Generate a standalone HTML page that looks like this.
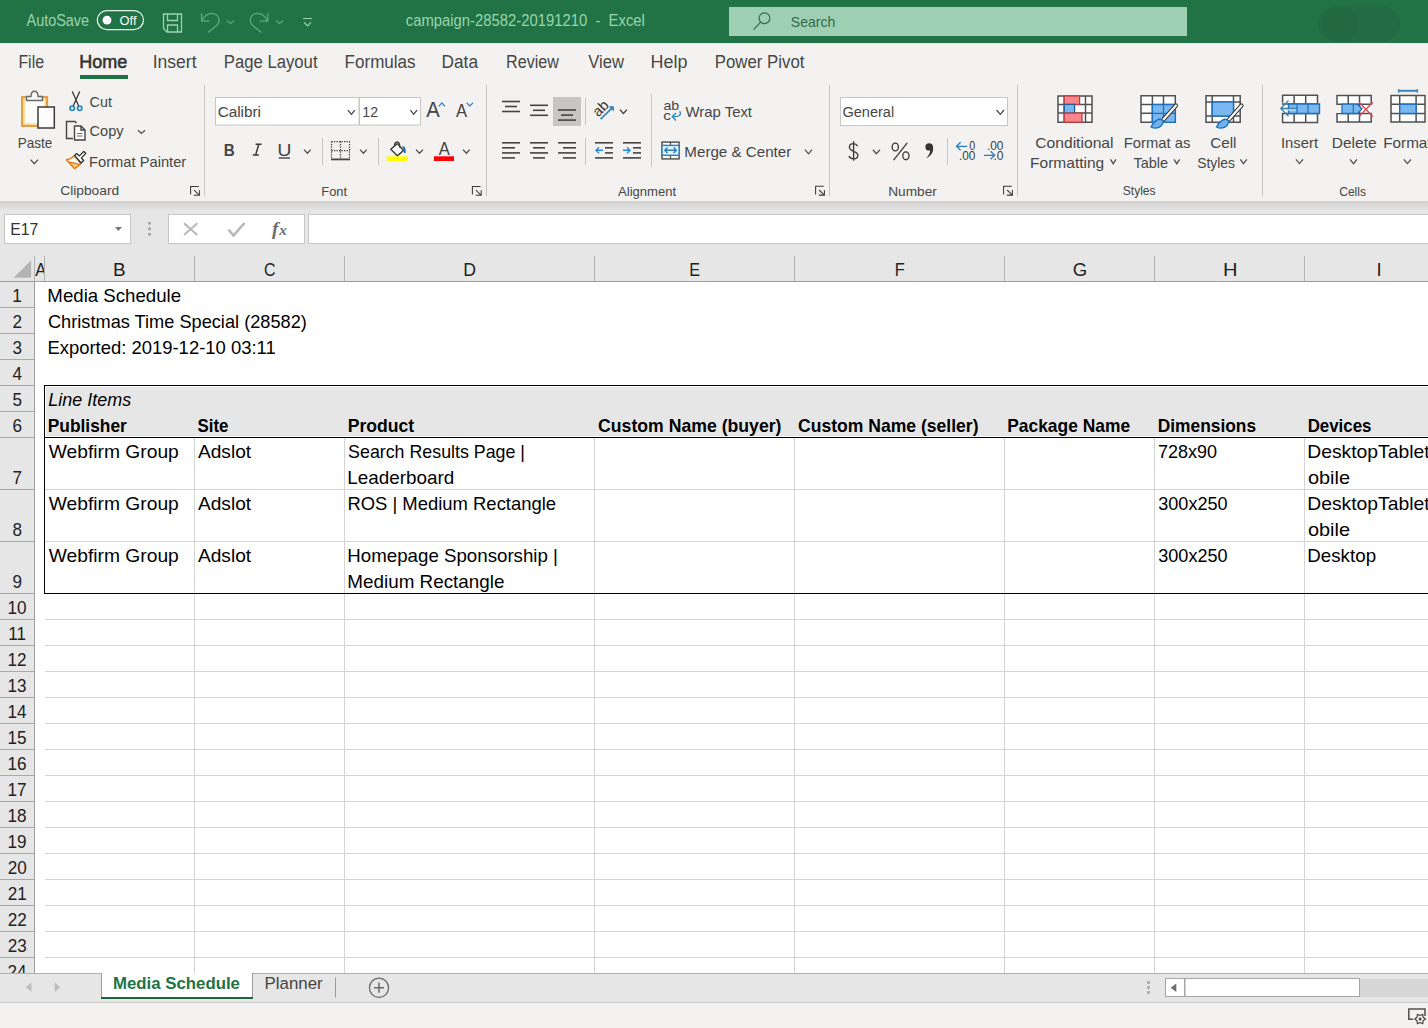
<!DOCTYPE html>
<html><head><meta charset="utf-8"><title>campaign-28582-20191210 - Excel</title>
<style>
html,body{margin:0;padding:0;background:#fff;}
body{width:1428px;height:1028px;overflow:hidden;position:relative;font-family:"Liberation Sans",sans-serif;}
.region{position:absolute;left:0;width:1428px;}
#titlebar{top:0;height:43px;background:#217346;}
#ribbon{top:43px;height:158px;background:#f3f2f1;}
#sheet{top:201px;height:772px;background:#e6e6e6;}
#tabs{top:973px;height:30px;background:#e6e6e6;}
#status{top:1003px;height:25px;background:#f3f2f1;}
svg{position:absolute;left:0;top:0;}
text{font-family:"Liberation Sans",sans-serif;white-space:pre;}
</style></head><body>
<div class="region" id="titlebar"></div>
<div class="region" id="ribbon"></div>
<div class="region" id="sheet"></div>
<div class="region" id="tabs"></div>
<div class="region" id="status"></div>
<svg width="1428" height="1028" viewBox="0 0 1428 1028">
<rect x="0" y="201" width="1428" height="772" fill="#e6e6e6"/>
<defs><linearGradient id="sh" x1="0" y1="0" x2="0" y2="1"><stop offset="0" stop-color="#cfcfcf"/><stop offset="1" stop-color="#e6e6e6"/></linearGradient></defs>
<rect x="0" y="201" width="1428" height="10" fill="url(#sh)"/>
<rect x="35" y="282" width="1393" height="691" fill="#fff"/>
<rect x="194" y="438" width="1" height="535" fill="#d4d4d4"/>
<rect x="344" y="438" width="1" height="535" fill="#d4d4d4"/>
<rect x="594" y="438" width="1" height="535" fill="#d4d4d4"/>
<rect x="794" y="438" width="1" height="535" fill="#d4d4d4"/>
<rect x="1004" y="438" width="1" height="535" fill="#d4d4d4"/>
<rect x="1154" y="438" width="1" height="535" fill="#d4d4d4"/>
<rect x="1304" y="438" width="1" height="535" fill="#d4d4d4"/>
<rect x="45" y="489" width="1383" height="1" fill="#d4d4d4"/>
<rect x="45" y="541" width="1383" height="1" fill="#d4d4d4"/>
<rect x="45" y="619" width="1383" height="1" fill="#d4d4d4"/>
<rect x="45" y="645" width="1383" height="1" fill="#d4d4d4"/>
<rect x="45" y="671" width="1383" height="1" fill="#d4d4d4"/>
<rect x="45" y="697" width="1383" height="1" fill="#d4d4d4"/>
<rect x="45" y="723" width="1383" height="1" fill="#d4d4d4"/>
<rect x="45" y="749" width="1383" height="1" fill="#d4d4d4"/>
<rect x="45" y="775" width="1383" height="1" fill="#d4d4d4"/>
<rect x="45" y="801" width="1383" height="1" fill="#d4d4d4"/>
<rect x="45" y="827" width="1383" height="1" fill="#d4d4d4"/>
<rect x="45" y="853" width="1383" height="1" fill="#d4d4d4"/>
<rect x="45" y="879" width="1383" height="1" fill="#d4d4d4"/>
<rect x="45" y="905" width="1383" height="1" fill="#d4d4d4"/>
<rect x="45" y="931" width="1383" height="1" fill="#d4d4d4"/>
<rect x="45" y="957" width="1383" height="1" fill="#d4d4d4"/>
<rect x="46" y="387" width="1382" height="49" fill="#e7e6e6"/>
<rect x="44" y="385" width="1384" height="1" fill="#000"/>
<rect x="44" y="437" width="1384" height="1" fill="#000"/>
<rect x="44" y="593" width="1384" height="1" fill="#000"/>
<rect x="44" y="385" width="1" height="209" fill="#000"/>
<rect x="34" y="256" width="1" height="25" fill="#b4b4b4"/>
<rect x="44" y="256" width="1" height="25" fill="#b4b4b4"/>
<rect x="194" y="256" width="1" height="25" fill="#b4b4b4"/>
<rect x="344" y="256" width="1" height="25" fill="#b4b4b4"/>
<rect x="594" y="256" width="1" height="25" fill="#b4b4b4"/>
<rect x="794" y="256" width="1" height="25" fill="#b4b4b4"/>
<rect x="1004" y="256" width="1" height="25" fill="#b4b4b4"/>
<rect x="1154" y="256" width="1" height="25" fill="#b4b4b4"/>
<rect x="1304" y="256" width="1" height="25" fill="#b4b4b4"/>
<rect x="0" y="281" width="1428" height="1" fill="#9e9e9e"/>
<rect x="34" y="282" width="1" height="691" fill="#9e9e9e"/>
<path d="M31.1,260.6 L31.1,277.7 L13.6,277.7 Z" fill="#b4b4b4"/>
<clipPath id="ca"><rect x="35" y="256" width="9" height="25"/></clipPath>
<g clip-path="url(#ca)">
<text x="35.36" y="275.50" font-size="18.60" font-weight="normal" font-style="normal" fill="#222" textLength="11.07" lengthAdjust="spacingAndGlyphs">A</text>
</g>
<text x="113.14" y="275.50" font-size="18.60" font-weight="normal" font-style="normal" fill="#222" textLength="12.65" lengthAdjust="spacingAndGlyphs">B</text>
<text x="264.00" y="275.50" font-size="18.60" font-weight="normal" font-style="normal" fill="#222" textLength="11.49" lengthAdjust="spacingAndGlyphs">C</text>
<text x="463.34" y="275.50" font-size="18.60" font-weight="normal" font-style="normal" fill="#222" textLength="12.80" lengthAdjust="spacingAndGlyphs">D</text>
<text x="689.26" y="275.50" font-size="18.60" font-weight="normal" font-style="normal" fill="#222" textLength="10.82" lengthAdjust="spacingAndGlyphs">E</text>
<text x="894.65" y="275.50" font-size="18.60" font-weight="normal" font-style="normal" fill="#222" textLength="10.02" lengthAdjust="spacingAndGlyphs">F</text>
<text x="1072.77" y="275.50" font-size="18.60" font-weight="normal" font-style="normal" fill="#222" textLength="14.42" lengthAdjust="spacingAndGlyphs">G</text>
<text x="1223.14" y="275.50" font-size="18.60" font-weight="normal" font-style="normal" fill="#222" textLength="14.51" lengthAdjust="spacingAndGlyphs">H</text>
<text x="1376.48" y="275.50" font-size="18.60" font-weight="normal" font-style="normal" fill="#222" textLength="5.17" lengthAdjust="spacingAndGlyphs">I</text>
<rect x="0" y="307" width="34" height="1" fill="#a8a8a8"/>
<rect x="0" y="333" width="34" height="1" fill="#a8a8a8"/>
<rect x="0" y="359" width="34" height="1" fill="#a8a8a8"/>
<rect x="0" y="385" width="34" height="1" fill="#a8a8a8"/>
<rect x="0" y="411" width="34" height="1" fill="#a8a8a8"/>
<rect x="0" y="437" width="34" height="1" fill="#a8a8a8"/>
<rect x="0" y="489" width="34" height="1" fill="#a8a8a8"/>
<rect x="0" y="541" width="34" height="1" fill="#a8a8a8"/>
<rect x="0" y="593" width="34" height="1" fill="#a8a8a8"/>
<rect x="0" y="619" width="34" height="1" fill="#a8a8a8"/>
<rect x="0" y="645" width="34" height="1" fill="#a8a8a8"/>
<rect x="0" y="671" width="34" height="1" fill="#a8a8a8"/>
<rect x="0" y="697" width="34" height="1" fill="#a8a8a8"/>
<rect x="0" y="723" width="34" height="1" fill="#a8a8a8"/>
<rect x="0" y="749" width="34" height="1" fill="#a8a8a8"/>
<rect x="0" y="775" width="34" height="1" fill="#a8a8a8"/>
<rect x="0" y="801" width="34" height="1" fill="#a8a8a8"/>
<rect x="0" y="827" width="34" height="1" fill="#a8a8a8"/>
<rect x="0" y="853" width="34" height="1" fill="#a8a8a8"/>
<rect x="0" y="879" width="34" height="1" fill="#a8a8a8"/>
<rect x="0" y="905" width="34" height="1" fill="#a8a8a8"/>
<rect x="0" y="931" width="34" height="1" fill="#a8a8a8"/>
<rect x="0" y="957" width="34" height="1" fill="#a8a8a8"/>
<clipPath id="rh"><rect x="0" y="282" width="34" height="691"/></clipPath><g clip-path="url(#rh)">
<text x="12.32" y="301.80" font-size="18.60" font-weight="normal" font-style="normal" fill="#222" textLength="9.52" lengthAdjust="spacingAndGlyphs">1</text>
<text x="12.55" y="327.80" font-size="18.60" font-weight="normal" font-style="normal" fill="#222" textLength="9.52" lengthAdjust="spacingAndGlyphs">2</text>
<text x="12.59" y="353.80" font-size="18.60" font-weight="normal" font-style="normal" fill="#222" textLength="9.52" lengthAdjust="spacingAndGlyphs">3</text>
<text x="12.59" y="379.80" font-size="18.60" font-weight="normal" font-style="normal" fill="#222" textLength="9.52" lengthAdjust="spacingAndGlyphs">4</text>
<text x="12.55" y="405.80" font-size="18.60" font-weight="normal" font-style="normal" fill="#222" textLength="9.52" lengthAdjust="spacingAndGlyphs">5</text>
<text x="12.49" y="431.80" font-size="18.60" font-weight="normal" font-style="normal" fill="#222" textLength="9.52" lengthAdjust="spacingAndGlyphs">6</text>
<text x="12.55" y="483.80" font-size="18.60" font-weight="normal" font-style="normal" fill="#222" textLength="9.52" lengthAdjust="spacingAndGlyphs">7</text>
<text x="12.55" y="535.80" font-size="18.60" font-weight="normal" font-style="normal" fill="#222" textLength="9.52" lengthAdjust="spacingAndGlyphs">8</text>
<text x="12.53" y="587.80" font-size="18.60" font-weight="normal" font-style="normal" fill="#222" textLength="9.52" lengthAdjust="spacingAndGlyphs">9</text>
<text x="7.48" y="613.80" font-size="18.60" font-weight="normal" font-style="normal" fill="#222" textLength="19.03" lengthAdjust="spacingAndGlyphs">10</text>
<text x="8.19" y="639.80" font-size="18.60" font-weight="normal" font-style="normal" fill="#222" textLength="17.76" lengthAdjust="spacingAndGlyphs">11</text>
<text x="7.59" y="665.80" font-size="18.60" font-weight="normal" font-style="normal" fill="#222" textLength="19.03" lengthAdjust="spacingAndGlyphs">12</text>
<text x="7.52" y="691.80" font-size="18.60" font-weight="normal" font-style="normal" fill="#222" textLength="19.03" lengthAdjust="spacingAndGlyphs">13</text>
<text x="7.40" y="717.80" font-size="18.60" font-weight="normal" font-style="normal" fill="#222" textLength="19.03" lengthAdjust="spacingAndGlyphs">14</text>
<text x="7.50" y="743.80" font-size="18.60" font-weight="normal" font-style="normal" fill="#222" textLength="19.03" lengthAdjust="spacingAndGlyphs">15</text>
<text x="7.52" y="769.80" font-size="18.60" font-weight="normal" font-style="normal" fill="#222" textLength="19.03" lengthAdjust="spacingAndGlyphs">16</text>
<text x="7.59" y="795.80" font-size="18.60" font-weight="normal" font-style="normal" fill="#222" textLength="19.03" lengthAdjust="spacingAndGlyphs">17</text>
<text x="7.52" y="821.80" font-size="18.60" font-weight="normal" font-style="normal" fill="#222" textLength="19.03" lengthAdjust="spacingAndGlyphs">18</text>
<text x="7.55" y="847.80" font-size="18.60" font-weight="normal" font-style="normal" fill="#222" textLength="19.03" lengthAdjust="spacingAndGlyphs">19</text>
<text x="7.70" y="873.80" font-size="18.60" font-weight="normal" font-style="normal" fill="#222" textLength="19.03" lengthAdjust="spacingAndGlyphs">20</text>
<text x="7.78" y="899.80" font-size="18.60" font-weight="normal" font-style="normal" fill="#222" textLength="19.03" lengthAdjust="spacingAndGlyphs">21</text>
<text x="7.80" y="925.80" font-size="18.60" font-weight="normal" font-style="normal" fill="#222" textLength="19.03" lengthAdjust="spacingAndGlyphs">22</text>
<text x="7.74" y="951.80" font-size="18.60" font-weight="normal" font-style="normal" fill="#222" textLength="19.03" lengthAdjust="spacingAndGlyphs">23</text>
<text x="7.61" y="977.80" font-size="18.60" font-weight="normal" font-style="normal" fill="#222" textLength="19.03" lengthAdjust="spacingAndGlyphs">24</text>
</g>
<text x="47.36" y="301.80" font-size="18.60" font-weight="normal" font-style="normal" fill="#000" textLength="133.76" lengthAdjust="spacingAndGlyphs">Media Schedule</text>
<text x="47.99" y="327.80" font-size="18.60" font-weight="normal" font-style="normal" fill="#000" textLength="258.86" lengthAdjust="spacingAndGlyphs">Christmas Time Special (28582)</text>
<text x="47.38" y="353.80" font-size="18.60" font-weight="normal" font-style="normal" fill="#000" textLength="228.34" lengthAdjust="spacingAndGlyphs">Exported: 2019-12-10 03:11</text>
<text x="48.36" y="406.10" font-size="18.60" font-weight="normal" font-style="italic" fill="#000" textLength="82.81" lengthAdjust="spacingAndGlyphs">Line Items</text>
<text x="47.73" y="431.80" font-size="18.60" font-weight="bold" font-style="normal" fill="#000" textLength="79.12" lengthAdjust="spacingAndGlyphs">Publisher</text>
<text x="197.49" y="431.80" font-size="18.60" font-weight="bold" font-style="normal" fill="#000" textLength="30.98" lengthAdjust="spacingAndGlyphs">Site</text>
<text x="347.71" y="431.80" font-size="18.60" font-weight="bold" font-style="normal" fill="#000" textLength="66.52" lengthAdjust="spacingAndGlyphs">Product</text>
<text x="598.09" y="431.80" font-size="18.60" font-weight="bold" font-style="normal" fill="#000" textLength="183.41" lengthAdjust="spacingAndGlyphs">Custom Name (buyer)</text>
<text x="798.10" y="431.80" font-size="18.60" font-weight="bold" font-style="normal" fill="#000" textLength="180.40" lengthAdjust="spacingAndGlyphs">Custom Name (seller)</text>
<text x="1007.23" y="431.80" font-size="18.60" font-weight="bold" font-style="normal" fill="#000" textLength="122.84" lengthAdjust="spacingAndGlyphs">Package Name</text>
<text x="1157.73" y="431.80" font-size="18.60" font-weight="bold" font-style="normal" fill="#000" textLength="98.38" lengthAdjust="spacingAndGlyphs">Dimensions</text>
<text x="1307.66" y="431.80" font-size="18.60" font-weight="bold" font-style="normal" fill="#000" textLength="63.83" lengthAdjust="spacingAndGlyphs">Devices</text>
<text x="48.80" y="457.80" font-size="18.60" font-weight="normal" font-style="normal" fill="#000" textLength="129.99" lengthAdjust="spacingAndGlyphs">Webfirm Group</text>
<text x="197.95" y="457.80" font-size="18.60" font-weight="normal" font-style="normal" fill="#000" textLength="53.18" lengthAdjust="spacingAndGlyphs">Adslot</text>
<text x="348.10" y="457.80" font-size="18.60" font-weight="normal" font-style="normal" fill="#000" textLength="176.89" lengthAdjust="spacingAndGlyphs">Search Results Page |</text>
<text x="347.34" y="483.80" font-size="18.60" font-weight="normal" font-style="normal" fill="#000" textLength="106.96" lengthAdjust="spacingAndGlyphs">Leaderboard</text>
<text x="1158.00" y="457.80" font-size="18.60" font-weight="normal" font-style="normal" fill="#000" textLength="59.09" lengthAdjust="spacingAndGlyphs">728x90</text>
<text x="1307.21" y="457.80" font-size="18.60" font-weight="normal" font-style="normal" fill="#000" textLength="122.43" lengthAdjust="spacingAndGlyphs">DesktopTablet</text>
<text x="1307.95" y="483.80" font-size="18.60" font-weight="normal" font-style="normal" fill="#000" textLength="42.10" lengthAdjust="spacingAndGlyphs">obile</text>
<text x="48.80" y="509.80" font-size="18.60" font-weight="normal" font-style="normal" fill="#000" textLength="129.99" lengthAdjust="spacingAndGlyphs">Webfirm Group</text>
<text x="197.95" y="509.80" font-size="18.60" font-weight="normal" font-style="normal" fill="#000" textLength="53.18" lengthAdjust="spacingAndGlyphs">Adslot</text>
<text x="347.38" y="509.80" font-size="18.60" font-weight="normal" font-style="normal" fill="#000" textLength="208.71" lengthAdjust="spacingAndGlyphs">ROS | Medium Rectangle</text>
<text x="1158.22" y="509.80" font-size="18.60" font-weight="normal" font-style="normal" fill="#000" textLength="69.39" lengthAdjust="spacingAndGlyphs">300x250</text>
<text x="1307.21" y="509.80" font-size="18.60" font-weight="normal" font-style="normal" fill="#000" textLength="122.43" lengthAdjust="spacingAndGlyphs">DesktopTablet</text>
<text x="1307.95" y="535.80" font-size="18.60" font-weight="normal" font-style="normal" fill="#000" textLength="42.10" lengthAdjust="spacingAndGlyphs">obile</text>
<text x="48.80" y="561.80" font-size="18.60" font-weight="normal" font-style="normal" fill="#000" textLength="129.99" lengthAdjust="spacingAndGlyphs">Webfirm Group</text>
<text x="197.95" y="561.80" font-size="18.60" font-weight="normal" font-style="normal" fill="#000" textLength="53.18" lengthAdjust="spacingAndGlyphs">Adslot</text>
<text x="347.36" y="561.80" font-size="18.60" font-weight="normal" font-style="normal" fill="#000" textLength="210.61" lengthAdjust="spacingAndGlyphs">Homepage Sponsorship |</text>
<text x="347.35" y="587.80" font-size="18.60" font-weight="normal" font-style="normal" fill="#000" textLength="157.06" lengthAdjust="spacingAndGlyphs">Medium Rectangle</text>
<text x="1158.22" y="561.80" font-size="18.60" font-weight="normal" font-style="normal" fill="#000" textLength="69.39" lengthAdjust="spacingAndGlyphs">300x250</text>
<text x="1307.25" y="561.80" font-size="18.60" font-weight="normal" font-style="normal" fill="#000" textLength="68.82" lengthAdjust="spacingAndGlyphs">Desktop</text>
<rect x="0" y="0" width="1428" height="43" fill="#217346"/>
<rect x="0" y="43" width="1428" height="1" fill="#dcefe3"/>
<rect x="1318" y="6" width="82" height="36" rx="18" fill="#236b45"/>
<ellipse cx="1340" cy="24" rx="18" ry="17" fill="#22673f" opacity="0.6"/>
<text x="26.56" y="25.90" font-size="16.30" font-weight="normal" font-style="normal" fill="#9bd3ae" textLength="62.57" lengthAdjust="spacingAndGlyphs">AutoSave</text>
<rect x="97.3" y="10.6" width="46.2" height="19" rx="9.5" fill="none" stroke="#e3f2e8" stroke-width="1.3"/>
<circle cx="107" cy="20.2" r="4.4" fill="#ffffff"/>
<text x="119.59" y="24.90" font-size="12.40" font-weight="normal" font-style="normal" fill="#f4faf6" textLength="16.99" lengthAdjust="spacingAndGlyphs">Off</text>
<path d="M163.5,14 H181.5 V32 H167 L163.5,28.5 Z M167.5,14 V20.5 H177.5 V14 M167.5,32 V25 H177.5 V32" fill="none" stroke="#9bd3ae" stroke-width="1.3"/>
<path d="M201.6,13.3 V21.1 H209.4 M202.2,20.5 C205,15 209.5,12.8 213.5,13.6 C219.5,15 220.5,21.5 216.8,25.3 L208.1,32.6" fill="none" stroke="#5aa97c" stroke-width="1.35"/>
<path d="M227.0,20.5 L230.5,23.5 L234.0,20.5" fill="none" stroke="#5aa97c" stroke-width="1.2"/>
<path d="M267.7,13.3 V21.1 H259.9 M267.1,20.5 C264.3,15 259.8,12.8 255.8,13.6 C249.8,15 248.8,21.5 252.5,25.3 L261.3,32.6" fill="none" stroke="#5aa97c" stroke-width="1.35"/>
<path d="M276.0,20.5 L279.5,23.5 L283.0,20.5" fill="none" stroke="#5aa97c" stroke-width="1.2"/>
<path d="M303.1,18.5 H311.9 M304,22.3 L307.5,25.8 L311,22.3" fill="none" stroke="#9bd3ae" stroke-width="1.2"/>
<text x="405.77" y="25.80" font-size="15.60" font-weight="normal" font-style="normal" fill="#98d5ac" textLength="239.13" lengthAdjust="spacingAndGlyphs">campaign-28582-20191210  -  Excel</text>
<rect x="729" y="7" width="458" height="29" fill="#9fcfb3"/>
<circle cx="764.5" cy="18.2" r="5.4" fill="none" stroke="#2f6e4a" stroke-width="1.15"/><path d="M760.6,22.1 L753.6,29.6" stroke="#2f6e4a" stroke-width="1.25"/>
<text x="790.87" y="26.60" font-size="15.00" font-weight="normal" font-style="normal" fill="#2f6c4a" textLength="44.52" lengthAdjust="spacingAndGlyphs">Search</text>
<text x="18.38" y="68.10" font-size="18.00" font-weight="normal" font-style="normal" fill="#464646" textLength="25.72" lengthAdjust="spacingAndGlyphs">File</text>
<text x="152.68" y="68.10" font-size="18.00" font-weight="normal" font-style="normal" fill="#464646" textLength="43.87" lengthAdjust="spacingAndGlyphs">Insert</text>
<text x="223.82" y="68.10" font-size="18.00" font-weight="normal" font-style="normal" fill="#464646" textLength="93.72" lengthAdjust="spacingAndGlyphs">Page Layout</text>
<text x="344.59" y="68.10" font-size="18.00" font-weight="normal" font-style="normal" fill="#464646" textLength="71.00" lengthAdjust="spacingAndGlyphs">Formulas</text>
<text x="441.58" y="68.10" font-size="18.00" font-weight="normal" font-style="normal" fill="#464646" textLength="36.42" lengthAdjust="spacingAndGlyphs">Data</text>
<text x="506.07" y="68.10" font-size="18.00" font-weight="normal" font-style="normal" fill="#464646" textLength="52.87" lengthAdjust="spacingAndGlyphs">Review</text>
<text x="588.22" y="68.10" font-size="18.00" font-weight="normal" font-style="normal" fill="#464646" textLength="35.73" lengthAdjust="spacingAndGlyphs">View</text>
<text x="650.52" y="68.10" font-size="18.00" font-weight="normal" font-style="normal" fill="#464646" textLength="36.93" lengthAdjust="spacingAndGlyphs">Help</text>
<text x="714.81" y="68.10" font-size="18.00" font-weight="normal" font-style="normal" fill="#464646" textLength="89.62" lengthAdjust="spacingAndGlyphs">Power Pivot</text>
<text x="79.21" y="68.10" font-size="17.60" font-weight="normal" font-style="normal" fill="#333333" textLength="48.05" lengthAdjust="spacingAndGlyphs" stroke="#333333" stroke-width="0.55">Home</text>
<rect x="80" y="75" width="48" height="4" fill="#217346"/>
<rect x="22.2" y="97.2" width="24.8" height="28.6" fill="#fdfbf7" stroke="#e79a35" stroke-width="2.2"/><rect x="24.2" y="99.2" width="20.8" height="24.6" fill="none" stroke="#fcd98f" stroke-width="1.2"/>
<path d="M26.5,100.5 V96.5 H31 C31,89.5 38,89.5 38,96.5 H42.5 V100.5 Z" fill="#f6f6f6" stroke="#6b6b6b" stroke-width="1.4"/>
<rect x="38" y="107" width="16.3" height="21" fill="#fcfcfc" stroke="#3a3a3a" stroke-width="1.5"/>
<text x="17.69" y="147.60" font-size="15.00" font-weight="normal" font-style="normal" fill="#464646" textLength="34.52" lengthAdjust="spacingAndGlyphs">Paste</text>
<path d="M30.6,159.6 L34.3,163.8 L38.0,159.6" fill="none" stroke="#505050" stroke-width="1.3"/>
<path d="M72.3,91.5 L78.9,106.4 M79.7,91.5 L73,106.4" fill="none" stroke="#333" stroke-width="1.25"/>
<circle cx="72.2" cy="108.3" r="2.2" fill="#e8f6fc" stroke="#2a86b8" stroke-width="1.7"/><circle cx="79.7" cy="108.3" r="2.2" fill="#e8f6fc" stroke="#2a86b8" stroke-width="1.7"/>
<text x="89.58" y="106.50" font-size="15.00" font-weight="normal" font-style="normal" fill="#464646" textLength="22.34" lengthAdjust="spacingAndGlyphs">Cut</text>
<path d="M73,138.5 H66.5 V121.5 H75 L76.5,123" fill="none" stroke="#444" stroke-width="1.4"/>
<path d="M74.5,126 H81 L85,130 V140 H74.5 Z M81,126 V130 H85" fill="#fafafa" stroke="#444" stroke-width="1.4"/>
<path d="M77,133.5 H82.5 M77,136 H82.5" stroke="#6a6a6a" stroke-width="1"/>
<text x="89.57" y="136.30" font-size="15.00" font-weight="normal" font-style="normal" fill="#464646" textLength="33.96" lengthAdjust="spacingAndGlyphs">Copy</text>
<path d="M138.0,130.2 L141.5,133.4 L145.0,130.2" fill="none" stroke="#505050" stroke-width="1.3"/>
<path d="M74.6,155.5 C72,158.2 69.5,159.3 66.4,159.7 L74.6,168.6 L80.8,163.6 Z" fill="#fffaf2" stroke="#e2801f" stroke-width="1.4" stroke-linejoin="round"/>
<path d="M68.6,162 L80,164.4 L74.6,168.6 Z" fill="#fbc97a" stroke="#e2801f" stroke-width="1.3" stroke-linejoin="round"/>
<path d="M74.6,155.5 L76.6,153.6 L79.4,155.9 L83.8,151.4 L85.8,153.4 L81.4,157.9 L83.6,160.5 L81.1,163 Z" fill="#ffffff" stroke="#333" stroke-width="1.35" stroke-linejoin="round"/>
<text x="89.09" y="166.60" font-size="15.00" font-weight="normal" font-style="normal" fill="#464646" textLength="97.15" lengthAdjust="spacingAndGlyphs">Format Painter</text>
<text x="60.31" y="195.30" font-size="12.90" font-weight="normal" font-style="normal" fill="#464646" textLength="58.85" lengthAdjust="spacingAndGlyphs">Clipboard</text>
<path d="M190.6,194.6 V186.4 H198.8 M194.1,190.2 L199.4,195.3 M193.8,195.3 H199.4 V190.2" fill="none" stroke="#3a3a3a" stroke-width="1.05"/>
<rect x="204" y="85" width="1" height="111" fill="#c8c6c4"/>
<rect x="215.5" y="97.5" width="143.5" height="27.5" fill="#fff" stroke="#c6c6c6" stroke-width="1"/>
<rect x="359.5" y="97.5" width="61" height="27.5" fill="#fff" stroke="#c6c6c6" stroke-width="1"/>
<text x="217.63" y="116.60" font-size="15.50" font-weight="normal" font-style="normal" fill="#464646" textLength="43.38" lengthAdjust="spacingAndGlyphs">Calibri</text>
<path d="M347.9,110.2 L351.4,114.3 L354.9,110.2" fill="none" stroke="#444" stroke-width="1.3"/>
<text x="362.34" y="116.60" font-size="15.50" font-weight="normal" font-style="normal" fill="#464646" textLength="15.70" lengthAdjust="spacingAndGlyphs">12</text>
<path d="M410.4,110.2 L413.7,114.3 L417.0,110.2" fill="none" stroke="#444" stroke-width="1.3"/>
<text x="426.35" y="117.00" font-size="22.50" font-weight="normal" font-style="normal" fill="#444" textLength="13.49" lengthAdjust="spacingAndGlyphs">A</text>
<path d="M438.7,106.4 L441.9,102.9 L445.0,106.4" fill="none" stroke="#2b7cd3" stroke-width="1.3"/>
<text x="455.96" y="117.00" font-size="18.00" font-weight="normal" font-style="normal" fill="#444" textLength="11.07" lengthAdjust="spacingAndGlyphs">A</text>
<path d="M466.6,102.9 L469.8,105.9 L473.0,102.9" fill="none" stroke="#2b7cd3" stroke-width="1.3"/>
<text x="223.67" y="155.70" font-size="17.20" font-weight="bold" font-style="normal" fill="#444" textLength="11.01" lengthAdjust="spacingAndGlyphs">B</text>
<path d="M255.6,144.3 H261.6 M252.8,155.1 H258.8 M258.8,144.3 L255.6,155.1" fill="none" stroke="#3a3a3a" stroke-width="1.5"/>
<text x="277.27" y="155.70" font-size="17.20" font-weight="normal" font-style="normal" fill="#444" textLength="14.25" lengthAdjust="spacingAndGlyphs">U</text>
<rect x="278.8" y="157.3" width="11.2" height="1.4" fill="#444"/>
<path d="M304.0,149.6 L307.4,153.3 L310.8,149.6" fill="none" stroke="#505050" stroke-width="1.3"/>
<rect x="322" y="138" width="1" height="27" fill="#c8c6c4"/>
<path d="M331.5,141.5 H349.5 M331.5,141.5 V159 M349.5,141.5 V159 M340.5,141.5 V159 M331.5,150.5 H349.5" fill="none" stroke="#3a3a3a" stroke-width="1.25" stroke-dasharray="1.3,1.2"/>
<rect x="331" y="158.5" width="19" height="1.8" fill="#444"/>
<path d="M360.0,149.6 L363.4,153.3 L366.8,149.6" fill="none" stroke="#505050" stroke-width="1.3"/>
<rect x="378" y="138" width="1" height="27" fill="#c8c6c4"/>
<path d="M390.8,149.2 L397.2,143.6 L403.6,150.4 L397.4,155.8 Z" fill="#fafafa" stroke="#3c3c3c" stroke-width="1.4"/><path d="M394.6,146.4 C393.8,141.8 398.6,140.2 399.6,144.6 L399.8,147.8" fill="none" stroke="#3c3c3c" stroke-width="1.3"/>
<path d="M402.5,147 C404.5,147 405,149.5 404.8,153" fill="none" stroke="#1e6fb0" stroke-width="1.8"/>
<rect x="386.8" y="156.3" width="20.4" height="4.7" fill="#ffff00"/>
<path d="M416.0,149.6 L419.5,153.3 L423.0,149.6" fill="none" stroke="#505050" stroke-width="1.3"/>
<text x="438.76" y="154.70" font-size="18.50" font-weight="normal" font-style="normal" fill="#444" textLength="11.07" lengthAdjust="spacingAndGlyphs">A</text>
<rect x="434" y="156.3" width="20" height="4.7" fill="#ff0000"/>
<path d="M463.0,149.6 L466.4,153.3 L469.7,149.6" fill="none" stroke="#505050" stroke-width="1.3"/>
<text x="321.34" y="196.00" font-size="12.90" font-weight="normal" font-style="normal" fill="#464646" textLength="25.77" lengthAdjust="spacingAndGlyphs">Font</text>
<path d="M472.4,194.6 V186.4 H480.6 M475.9,190.2 L481.2,195.3 M475.6,195.3 H481.2 V190.2" fill="none" stroke="#3a3a3a" stroke-width="1.05"/>
<rect x="486" y="85" width="1" height="111" fill="#c8c6c4"/>
<rect x="502" y="100.7" width="18" height="1.6" fill="#444"/>
<rect x="505" y="105.7" width="12" height="1.6" fill="#444"/>
<rect x="502" y="110.7" width="18" height="1.6" fill="#444"/>
<rect x="530" y="104.5" width="18" height="1.6" fill="#444"/>
<rect x="533" y="109.5" width="12" height="1.6" fill="#444"/>
<rect x="530" y="114.5" width="18" height="1.6" fill="#444"/>
<rect x="553" y="97" width="28" height="29" fill="#c8c6c4"/>
<rect x="558" y="109.2" width="18" height="1.6" fill="#444"/>
<rect x="561" y="114.3" width="12" height="1.6" fill="#444"/>
<rect x="558" y="119.3" width="18" height="1.6" fill="#444"/>
<rect x="585" y="98" width="1" height="27" fill="#c8c6c4"/>
<text x="0" y="0" font-size="14.5" fill="#333" transform="translate(598.2,117.4) rotate(-45)" font-family="Liberation Sans">ab</text>
<path d="M600.6,119.1 L612.5,107.6" fill="none" stroke="#2a7ec0" stroke-width="1.5"/><path d="M613.8,106.3 L608.6,106.3 L613.8,111.5 Z" fill="#2a7ec0"/>
<path d="M620.0,109.6 L623.4,113.6 L626.8,109.6" fill="none" stroke="#333" stroke-width="1.3"/>
<rect x="651" y="94" width="1" height="73" fill="#c8c6c4"/>
<text x="663.40" y="110.20" font-size="12.60" font-weight="normal" font-style="normal" fill="#444" textLength="15.70" lengthAdjust="spacingAndGlyphs">ab</text>
<text x="663.35" y="119.50" font-size="12.60" font-weight="normal" font-style="normal" fill="#444" textLength="7.67" lengthAdjust="spacingAndGlyphs">c</text>
<path d="M679.8,111.2 C681.5,114.5 679.5,116.6 675,116.6 H672.5 M676,113 L672.3,116.6 L676,120.4" fill="none" stroke="#2a86c8" stroke-width="1.4"/>
<text x="685.53" y="116.80" font-size="15.00" font-weight="normal" font-style="normal" fill="#464646" textLength="66.49" lengthAdjust="spacingAndGlyphs">Wrap Text</text>
<rect x="502" y="142.0" width="18" height="1.6" fill="#444"/>
<rect x="502" y="147.0" width="13" height="1.6" fill="#444"/>
<rect x="502" y="152.1" width="18" height="1.6" fill="#444"/>
<rect x="502" y="157.1" width="13" height="1.6" fill="#444"/>
<rect x="530" y="142.0" width="18" height="1.6" fill="#444"/>
<rect x="533" y="147.0" width="12" height="1.6" fill="#444"/>
<rect x="530" y="152.1" width="18" height="1.6" fill="#444"/>
<rect x="533" y="157.1" width="12" height="1.6" fill="#444"/>
<rect x="558" y="142.0" width="18" height="1.6" fill="#444"/>
<rect x="563" y="147.0" width="13" height="1.6" fill="#444"/>
<rect x="558" y="152.1" width="18" height="1.6" fill="#444"/>
<rect x="563" y="157.1" width="13" height="1.6" fill="#444"/>
<rect x="585" y="138" width="1" height="27" fill="#c8c6c4"/>
<rect x="595" y="142.0" width="18" height="1.6" fill="#444"/>
<rect x="605" y="147.0" width="8" height="1.6" fill="#444"/>
<rect x="605" y="152.1" width="8" height="1.6" fill="#444"/>
<rect x="595" y="157.1" width="18" height="1.6" fill="#444"/>
<path d="M603,150.3 H596 M599,147.3 L596,150.3 L599,153.3" fill="none" stroke="#2b88d8" stroke-width="1.4"/>
<rect x="623" y="142.0" width="18" height="1.6" fill="#444"/>
<rect x="633" y="147.0" width="8" height="1.6" fill="#444"/>
<rect x="633" y="152.1" width="8" height="1.6" fill="#444"/>
<rect x="623" y="157.1" width="18" height="1.6" fill="#444"/>
<path d="M623,150.3 H630 M627,147.3 L630,150.3 L627,153.3" fill="none" stroke="#2b88d8" stroke-width="1.4"/>
<rect x="662" y="142.1" width="17.1" height="16.8" fill="#fafafa" stroke="#4a4a4a" stroke-width="1.4"/>
<path d="M670.5,142.1 V145 M670.5,155.5 V158.9" fill="none" stroke="#4a4a4a" stroke-width="1.2"/>
<rect x="662" y="145.4" width="17.1" height="9.9" fill="#e3f1fb" stroke="#2a7ec0" stroke-width="1.4"/>
<path d="M664.8,150.3 H676.3 M667.5,147.6 L664.8,150.3 L667.5,153 M673.6,147.6 L676.3,150.3 L673.6,153" fill="none" stroke="#2a7ec0" stroke-width="1.4"/>
<text x="684.35" y="156.70" font-size="15.00" font-weight="normal" font-style="normal" fill="#464646" textLength="106.90" lengthAdjust="spacingAndGlyphs">Merge &amp; Center</text>
<path d="M804.9,149.6 L808.5,153.8 L812.0,149.6" fill="none" stroke="#505050" stroke-width="1.3"/>
<text x="618.07" y="195.50" font-size="12.90" font-weight="normal" font-style="normal" fill="#464646" textLength="58.12" lengthAdjust="spacingAndGlyphs">Alignment</text>
<path d="M815.6,194.4 V186.2 H823.8 M819.1,190.0 L824.4,195.1 M818.8,195.1 H824.4 V190.0" fill="none" stroke="#3a3a3a" stroke-width="1.05"/>
<rect x="829" y="85" width="1" height="111" fill="#c8c6c4"/>
<rect x="840.5" y="97.5" width="167" height="28" fill="#fff" stroke="#c6c6c6" stroke-width="1"/>
<text x="842.47" y="116.70" font-size="15.50" font-weight="normal" font-style="normal" fill="#464646" textLength="51.71" lengthAdjust="spacingAndGlyphs">General</text>
<path d="M996.6,110.0 L1000.3,114.3 L1004.0,110.0" fill="none" stroke="#444" stroke-width="1.3"/>
<path d="M853.6,141.2 V160.8 M857.6,146.2 C856.5,144.2 855,143.6 853.4,143.6 C850.8,143.6 849.4,145.3 849.4,147.3 C849.4,152 857.9,150.6 857.9,155.2 C857.9,157.5 856,158.8 853.5,158.8 C851.3,158.8 849.7,157.8 848.9,156" fill="none" stroke="#3c3c3c" stroke-width="1.35"/>
<path d="M872.9,149.8 L876.4,153.8 L879.9,149.8" fill="none" stroke="#505050" stroke-width="1.3"/>
<ellipse cx="895.3" cy="147" rx="3.1" ry="3.9" fill="none" stroke="#3c3c3c" stroke-width="1.35"/><ellipse cx="905.9" cy="155.8" rx="3.1" ry="3.9" fill="none" stroke="#3c3c3c" stroke-width="1.35"/><path d="M907.2,142.8 L893.6,160.1" stroke="#3c3c3c" stroke-width="1.35"/>
<circle cx="929.1" cy="146.9" r="3.7" fill="#333"/><path d="M931.5,144.5 C934.5,147 934,155 925.8,158.6 C929.5,155 930.5,152 930,149.5 Z" fill="#333"/>
<rect x="947" y="138" width="1" height="27" fill="#c8c6c4"/>
<text x="969.27" y="149.70" font-size="12.20" font-weight="normal" font-style="normal" fill="#3c3c3c" textLength="5.94" lengthAdjust="spacingAndGlyphs">0</text>
<text x="958.93" y="159.70" font-size="12.20" font-weight="normal" font-style="normal" fill="#3c3c3c" textLength="16.52" lengthAdjust="spacingAndGlyphs">.00</text>
<path d="M967.2,146.3 H956.8 M960.6,142.3 L956.6,146.3 L960.6,150.3" fill="none" stroke="#2a7ec0" stroke-width="1.3"/>
<text x="986.93" y="149.70" font-size="12.20" font-weight="normal" font-style="normal" fill="#3c3c3c" textLength="16.52" lengthAdjust="spacingAndGlyphs">.00</text>
<text x="993.41" y="159.70" font-size="12.20" font-weight="normal" font-style="normal" fill="#3c3c3c" textLength="10.06" lengthAdjust="spacingAndGlyphs">.0</text>
<path d="M984,155.3 H994.4 M990.6,151.3 L994.6,155.3 L990.6,159.3" fill="none" stroke="#2a7ec0" stroke-width="1.3"/>
<text x="888.27" y="195.80" font-size="12.90" font-weight="normal" font-style="normal" fill="#464646" textLength="48.55" lengthAdjust="spacingAndGlyphs">Number</text>
<path d="M1003.6,194.4 V186.2 H1011.8 M1007.1,190.0 L1012.4,195.1 M1006.8,195.1 H1012.4 V190.0" fill="none" stroke="#3a3a3a" stroke-width="1.05"/>
<rect x="1017" y="85" width="1" height="111" fill="#c8c6c4"/>
<rect x="1058.0" y="96.0" width="34.0" height="26.2" fill="#ffffff"/>
<path d="M1058.0,96.0 H1092.0 M1058.0,122.2 H1092.0 M1058.0,96.0 V122.2 M1092.0,96.0 V122.2 M1064.2,96.0 V122.2 M1085.5,96.0 V122.2 M1058.0,104.4 H1092.0 M1058.0,113.1 H1092.0 " fill="none" stroke="#505050" stroke-width="1.5" stroke-linecap="square"/>
<rect x="1064.2" y="96" width="15.4" height="8.4" fill="#f7868c" stroke="#c23b3f" stroke-width="1.3"/>
<rect x="1064.2" y="104.4" width="10.4" height="8.7" fill="#7ab8f0" stroke="#1f5f99" stroke-width="1.3"/>
<rect x="1064.2" y="113.1" width="17.8" height="9.1" fill="#f7868c" stroke="#c23b3f" stroke-width="1.3"/>
<text x="1035.22" y="147.90" font-size="15.00" font-weight="normal" font-style="normal" fill="#464646" textLength="78.32" lengthAdjust="spacingAndGlyphs">Conditional</text>
<text x="1030.12" y="167.70" font-size="15.00" font-weight="normal" font-style="normal" fill="#464646" textLength="74.08" lengthAdjust="spacingAndGlyphs">Formatting</text>
<path d="M1110.5,159.3 L1113.2,163.7 L1116.0,159.3" fill="none" stroke="#505050" stroke-width="1.3"/>
<rect x="1141.0" y="95.8" width="34.3" height="26.5" fill="#ffffff"/>
<path d="M1141.0,95.8 H1175.3 M1141.0,122.3 H1175.3 M1141.0,95.8 V122.3 M1175.3,95.8 V122.3 M1152.4,95.8 V122.3 M1163.5,95.8 V122.3 M1141.0,104.6 H1175.3 M1141.0,113.3 H1175.3 " fill="none" stroke="#505050" stroke-width="1.5" stroke-linecap="square"/>
<rect x="1152.4" y="104.6" width="22.9" height="17.7" fill="#7ab8f0" stroke="#1f6fbf" stroke-width="1.4"/>
<path d="M1163.5,104.6 V122.3 M1152.4,113.3 H1175.3" stroke="#1f6fbf" stroke-width="1.2"/>
<path d="M1176.0,105.5 L1163.5,119.5" stroke="#3c3c3c" stroke-width="4.2" stroke-linecap="round"/>
<path d="M1176.0,105.5 L1163.5,119.5" stroke="#ffffff" stroke-width="2" stroke-linecap="round"/>
<path d="M1163.0,121.0 C1160.0,117.0 1154.0,120.5 1151.0,127.0 C1156.0,129.5 1163.0,127.5 1163.0,121.0 Z" fill="#6fb2ec" stroke="#1f6fbf" stroke-width="1.3"/>
<text x="1123.78" y="147.90" font-size="15.00" font-weight="normal" font-style="normal" fill="#464646" textLength="66.66" lengthAdjust="spacingAndGlyphs">Format as</text>
<text x="1133.47" y="167.70" font-size="15.00" font-weight="normal" font-style="normal" fill="#464646" textLength="34.65" lengthAdjust="spacingAndGlyphs">Table</text>
<path d="M1174.0,159.3 L1176.8,163.7 L1179.7,159.3" fill="none" stroke="#505050" stroke-width="1.3"/>
<rect x="1206.0" y="95.8" width="34.2" height="26.5" fill="#ffffff"/>
<path d="M1206.0,95.8 H1240.2 M1206.0,122.3 H1240.2 M1206.0,95.8 V122.3 M1240.2,95.8 V122.3 M1212.2,95.8 V122.3 M1233.5,95.8 V122.3 M1206.0,102.0 H1240.2 M1206.0,116.0 H1240.2 " fill="none" stroke="#505050" stroke-width="1.5" stroke-linecap="square"/>
<rect x="1212.2" y="102" width="21.3" height="14" fill="#7ab8f0" stroke="#1f6fbf" stroke-width="1.4"/>
<path d="M1241.5,105.5 L1229.0,119.5" stroke="#3c3c3c" stroke-width="4.2" stroke-linecap="round"/>
<path d="M1241.5,105.5 L1229.0,119.5" stroke="#ffffff" stroke-width="2" stroke-linecap="round"/>
<path d="M1228.5,121.0 C1225.5,117.0 1219.5,120.5 1216.5,127.0 C1221.5,129.5 1228.5,127.5 1228.5,121.0 Z" fill="#6fb2ec" stroke="#1f6fbf" stroke-width="1.3"/>
<text x="1210.24" y="147.90" font-size="15.00" font-weight="normal" font-style="normal" fill="#464646" textLength="26.19" lengthAdjust="spacingAndGlyphs">Cell</text>
<text x="1197.18" y="167.70" font-size="15.00" font-weight="normal" font-style="normal" fill="#464646" textLength="37.82" lengthAdjust="spacingAndGlyphs">Styles</text>
<path d="M1240.3,159.3 L1243.5,163.7 L1246.8,159.3" fill="none" stroke="#505050" stroke-width="1.3"/>
<text x="1122.76" y="195.20" font-size="12.90" font-weight="normal" font-style="normal" fill="#464646" textLength="32.87" lengthAdjust="spacingAndGlyphs">Styles</text>
<rect x="1262" y="85" width="1" height="111" fill="#c8c6c4"/>
<rect x="1282.6" y="95.3" width="34.9" height="27.2" fill="#ffffff"/>
<path d="M1282.6,95.3 H1317.5 M1282.6,122.5 H1317.5 M1282.6,95.3 V102.0 M1282.6,115.0 V122.5 M1317.5,95.3 V122.5 M1294.1,95.3 V122.5 M1305.7,95.3 V122.5 M1282.6,104.0 H1317.5 M1282.6,113.5 H1317.5 " fill="none" stroke="#505050" stroke-width="1.5" stroke-linecap="square"/>
<path d="M1288.5,104 H1319.5 V113.5 H1288.5 Z" fill="#7ab8f0" stroke="#1f6fbf" stroke-width="1.4"/>
<path d="M1297,104 V113.5 M1308,104 V113.5" stroke="#1f6fbf" stroke-width="1.2"/>
<path d="M1281,108.6 H1296 L1296,110.5 H1287 Z" fill="#cfe6fb"/>
<path d="M1296.2,108.5 H1281.5 M1288.5,100.5 L1280.8,108.5 L1288.5,116.3" fill="none" stroke="#3b82a8" stroke-width="1.3"/>
<text x="1281.03" y="148.00" font-size="15.00" font-weight="normal" font-style="normal" fill="#464646" textLength="36.99" lengthAdjust="spacingAndGlyphs">Insert</text>
<path d="M1295.9,159.3 L1299.5,163.6 L1303.0,159.3" fill="none" stroke="#505050" stroke-width="1.3"/>
<rect x="1337.0" y="95.6" width="34.2" height="26.4" fill="#ffffff"/>
<path d="M1337.0,95.6 H1371.2 M1337.0,122.0 H1371.2 M1337.0,95.6 V104.2 M1337.0,113.5 V122.0 M1371.2,95.6 V104.2 M1371.2,113.5 V122.0 M1348.2,95.6 V122.0 M1359.5,95.6 V122.0 M1337.0,104.2 H1371.2 M1337.0,113.5 H1371.2 " fill="none" stroke="#505050" stroke-width="1.5" stroke-linecap="square"/>
<rect x="1336" y="105" width="5" height="8" fill="#f3f2f1"/>
<path d="M1342,104.2 H1357.5 L1361.9,108.85 L1357.5,113.5 H1342 Z" fill="#7ab8f0" stroke="#1f6fbf" stroke-width="1.3"/>
<path d="M1353.3,104.2 V113.5" stroke="#1f6fbf" stroke-width="1.2"/>
<path d="M1359,102.2 L1372.8,116.4 M1372.8,102.2 L1359,116.4" stroke="#e0474c" stroke-width="1.4"/>
<text x="1331.72" y="148.00" font-size="15.00" font-weight="normal" font-style="normal" fill="#464646" textLength="44.85" lengthAdjust="spacingAndGlyphs">Delete</text>
<path d="M1350.0,159.3 L1353.5,163.6 L1357.0,159.3" fill="none" stroke="#505050" stroke-width="1.3"/>
<rect x="1391.0" y="95.6" width="34.0" height="26.4" fill="#ffffff"/>
<path d="M1391.0,95.6 H1425.0 M1391.0,122.0 H1425.0 M1391.0,95.6 V122.0 M1425.0,95.6 V122.0 M1399.7,95.6 V122.0 M1416.1,95.6 V122.0 M1391.0,104.2 H1425.0 M1391.0,113.5 H1425.0 " fill="none" stroke="#505050" stroke-width="1.5" stroke-linecap="square"/>
<rect x="1399.7" y="104.2" width="16.4" height="9.3" fill="#7ab8f0" stroke="#1f6fbf" stroke-width="1.4"/>
<path d="M1398.6,90.8 H1417.4" stroke="#3b86b8" stroke-width="2"/><path d="M1398.6,88.9 V92.7 M1417.4,88.9 V92.7" stroke="#3b86b8" stroke-width="1.3"/>
<text x="1383.24" y="148.00" font-size="15.00" font-weight="normal" font-style="normal" fill="#464646" textLength="48.37" lengthAdjust="spacingAndGlyphs">Format</text>
<path d="M1403.8,159.3 L1407.4,163.6 L1411.0,159.3" fill="none" stroke="#505050" stroke-width="1.3"/>
<text x="1339.20" y="195.80" font-size="12.90" font-weight="normal" font-style="normal" fill="#464646" textLength="26.83" lengthAdjust="spacingAndGlyphs">Cells</text>
<rect x="4.5" y="214.5" width="126" height="29" fill="#fff" stroke="#c6c6c6" stroke-width="1"/>
<text x="10.20" y="234.90" font-size="15.80" font-weight="normal" font-style="normal" fill="#333" textLength="28.12" lengthAdjust="spacingAndGlyphs">E17</text>
<path d="M114.9,227 H122 L118.45,231 Z" fill="#777"/>
<rect x="148" y="222" width="3" height="2.6" fill="#a8a8a8"/>
<rect x="148" y="227.5" width="3" height="2.6" fill="#a8a8a8"/>
<rect x="148" y="233" width="3" height="2.6" fill="#a8a8a8"/>
<rect x="168.5" y="214.5" width="136" height="29" fill="#fff" stroke="#c6c6c6" stroke-width="1"/>
<path d="M184,223.3 L197.3,235 M197.3,223.3 L184,235" stroke="#b8b8b8" stroke-width="2"/>
<path d="M228.5,229.5 L233.5,235.5 L244.5,223" fill="none" stroke="#b8b8b8" stroke-width="2.6"/>
<text x="272" y="235" font-size="19.5" font-style="italic" font-weight="bold" fill="#6e6e6e" style="font-family:'Liberation Serif'">f</text>
<text x="279.3" y="235" font-size="15" font-style="italic" font-weight="bold" fill="#6e6e6e" style="font-family:'Liberation Serif'">x</text>
<rect x="308.5" y="214.5" width="1125" height="29" fill="#fff" stroke="#c6c6c6" stroke-width="1"/>
<rect x="0" y="973" width="101" height="1" fill="#b0b0b0"/>
<rect x="253" y="973" width="1175" height="1" fill="#b0b0b0"/>
<rect x="0" y="974" width="1428" height="28" fill="#e6e6e6"/>
<rect x="0" y="1002" width="1428" height="1" fill="#cfcfcf"/>
<rect x="0" y="1003" width="1428" height="25" fill="#f3f2f1"/>
<path d="M31.5,982.5 V992 L25.7,987.25 Z" fill="#bdbdbd"/>
<path d="M54.6,982.5 V992 L60.4,987.25 Z" fill="#bdbdbd"/>
<rect x="102" y="973" width="150" height="24" fill="#ffffff"/>
<rect x="101" y="973" width="1" height="26" fill="#9a9a9a"/>
<rect x="252" y="973" width="1" height="26" fill="#9a9a9a"/>
<rect x="101" y="997" width="152" height="2" fill="#1f6540"/>
<text x="112.97" y="989.30" font-size="16.50" font-weight="bold" font-style="normal" fill="#217346" textLength="126.99" lengthAdjust="spacingAndGlyphs">Media Schedule</text>
<text x="264.61" y="989.30" font-size="16.80" font-weight="normal" font-style="normal" fill="#444" textLength="58.13" lengthAdjust="spacingAndGlyphs">Planner</text>
<rect x="335" y="977.5" width="1" height="20" fill="#9a9a9a"/>
<circle cx="379" cy="987.8" r="9.6" fill="none" stroke="#6a6a6a" stroke-width="1.3"/><path d="M374,987.8 H384 M379,982.8 V992.8" stroke="#6a6a6a" stroke-width="1.5"/>
<rect x="1147" y="981" width="3" height="3" fill="#b0b0b0"/>
<rect x="1147" y="986" width="3" height="3" fill="#b0b0b0"/>
<rect x="1147" y="991" width="3" height="3" fill="#b0b0b0"/>
<rect x="1360" y="979" width="68" height="18" fill="#d6d6d6"/>
<rect x="1165.5" y="978.5" width="194" height="18" fill="#fff" stroke="#a6a6a6" stroke-width="1"/>
<rect x="1184" y="979" width="1.5" height="17" fill="#a6a6a6"/>
<path d="M1176.3,983.4 V992.1 L1170.7,987.75 Z" fill="#6e6e6e"/>
<path d="M1413.2,1019.2 H1408.8 V1008.9 H1425 V1016" fill="none" stroke="#505050" stroke-width="1.5"/>
<path d="M1425.50,1019.00 L1423.13,1020.75 L1422.80,1023.68 L1420.10,1022.50 L1417.40,1023.68 L1417.07,1020.75 L1414.70,1019.00 L1417.07,1017.25 L1417.40,1014.32 L1420.10,1015.50 L1422.80,1014.32 L1423.13,1017.25 Z" fill="#f3f2f1" stroke="#454545" stroke-width="1.2" stroke-linejoin="round"/><circle cx="1420.1" cy="1019" r="1.5" fill="#454545"/>
</svg>
</body></html>
